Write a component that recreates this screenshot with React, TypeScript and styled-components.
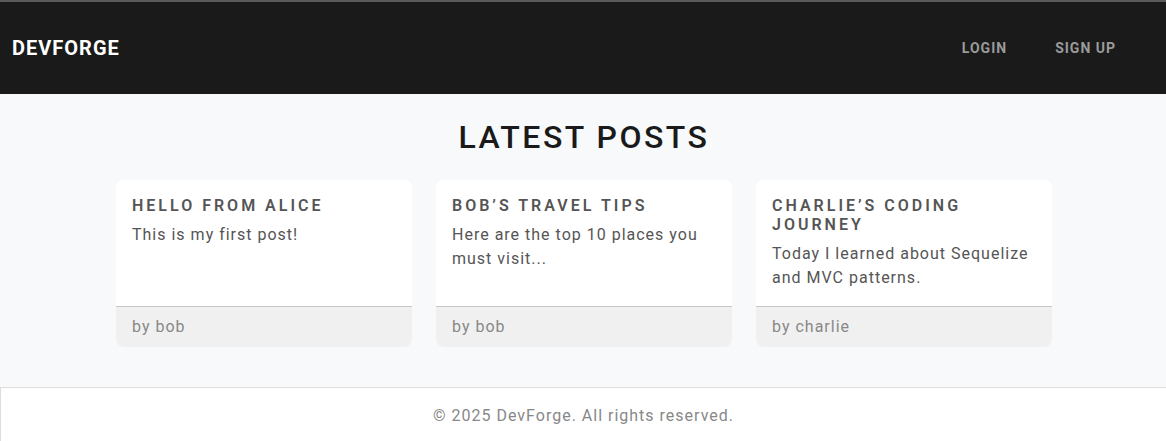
import React from "react";
import styled, { createGlobalStyle } from "styled-components";

const GlobalStyle = createGlobalStyle`
  * { box-sizing: border-box; }
  html, body { margin: 0; padding: 0; }
  body {
    font-family: Roboto, "Liberation Sans", Arial, sans-serif;
    background: #f8f9fa;
    color: #555;
  }
`;

const Page = styled.div`
  display: flex;
  flex-direction: column;
  min-height: 100vh;
`;

const Header = styled.header`
  display: flex;
  align-items: center;
  justify-content: space-between;
  height: 94px;
  padding: 0 50px 0 12px;
  background: #1a1a1a;
  border-top: 2px solid #5a5a5a;
`;

const Logo = styled.a`
  color: #fff;
  font-size: 20px;
  font-weight: 700;
  letter-spacing: 1px;
  text-decoration: none;
`;

const Nav = styled.nav`
  display: flex;
  gap: 48px;
`;

const NavLink = styled.a`
  color: #9a9a9a;
  font-size: 14px;
  font-weight: 700;
  letter-spacing: 1px;
  text-decoration: none;
  text-transform: uppercase;
`;

const Main = styled.main`
  flex: 1;
  padding: 24px 0 40px 2px;
`;

const Title = styled.h1`
  margin: 0 0 24px;
  text-align: center;
  font-size: 32px;
  font-weight: 500;
  letter-spacing: 2.5px;
  color: #1a1a1a;
  line-height: normal;
`;

const Grid = styled.div`
  display: grid;
  grid-template-columns: repeat(3, 296px);
  gap: 24px;
  justify-content: center;
`;

const Card = styled.article`
  display: flex;
  flex-direction: column;
  background: #fff;
  border-radius: 8px;
  overflow: hidden;
`;

const CardBody = styled.div`
  padding: 16px;
  flex: 1;
`;

const CardTitle = styled.h2`
  margin: 0 0 8px;
  font-size: 16px;
  line-height: 1.2;
  font-weight: 600;
  letter-spacing: 3px;
  text-transform: uppercase;
  color: #555;
`;

const CardText = styled.p`
  margin: 0;
  font-size: 16px;
  line-height: 24px;
  letter-spacing: 1px;
  color: #555;
`;

const CardFooter = styled.div`
  padding: 8px 16px;
  background: #f0f0f0;
  border-top: 1px solid #c8c8c8;
  font-size: 16px;
  line-height: 24px;
  letter-spacing: 1px;
  color: #888;
`;

const Footer = styled.footer`
  background: #fff;
  border-top: 1px solid #ddd;
  border-left: 1px solid #ddd;
  padding: 16px;
  text-align: center;
  font-size: 16px;
  line-height: 24px;
  letter-spacing: 1px;
  color: #888;
`;

const posts = [
  { title: "Hello from Alice", text: "This is my first post!", author: "bob" },
  { title: "Bob’s Travel Tips", text: "Here are the top 10 places you must visit...", author: "bob" },
  { title: "Charlie’s Coding Journey", text: "Today I learned about Sequelize and MVC patterns.", author: "charlie" },
];

export default function App() {
  return (
    <>
      <GlobalStyle />
      <Page>
        <Header>
          <Logo href="#">DEVFORGE</Logo>
          <Nav>
            <NavLink href="#">Login</NavLink>
            <NavLink href="#">Sign Up</NavLink>
          </Nav>
        </Header>
        <Main>
          <Title>LATEST POSTS</Title>
          <Grid>
            {posts.map((p) => (
              <Card key={p.title}>
                <CardBody>
                  <CardTitle>{p.title}</CardTitle>
                  <CardText>{p.text}</CardText>
                </CardBody>
                <CardFooter>by {p.author}</CardFooter>
              </Card>
            ))}
          </Grid>
        </Main>
        <Footer>© 2025 DevForge. All rights reserved.</Footer>
      </Page>
    </>
  );
}
